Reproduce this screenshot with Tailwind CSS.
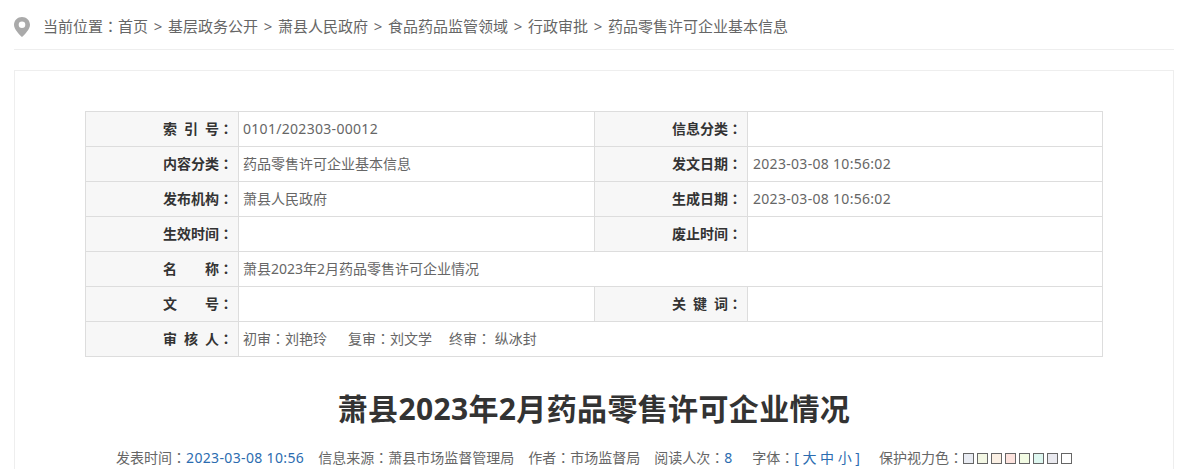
<!DOCTYPE html>
<html lang="zh-CN">
<head>
    <meta charset="UTF-8">
    <title>药品零售许可企业基本信息</title>
    <script src="https://cdn.jsdelivr.net/npm/@tailwindcss/browser@4"></script>
</head>
<body class="bg-white h-[469px] overflow-hidden font-['Noto_Sans','Noto_Sans_CJK_SC',sans-serif] text-[14px] text-[#666]">
    <div class="mx-[14px] w-[1160px]">
        <!-- breadcrumb -->
        <div class="flex items-center h-[50px] pt-[4px] border-b border-[#eee] text-[15px]">
            <svg class="w-[16px] h-[20px] mr-[13px]" viewBox="0 0 16 20"><path fill-rule="evenodd" fill="#aaa" d="M8 0C3.600 0 0 3.400 0 7.700c0 4.600 5.300 9.600 8 12.300 2.700-2.700 8-7.700 8-12.300C16 3.400 12.400 0 8 0zm0 11a3.300 3.300 0 1 1 0-6.600A3.300 3.300 0 0 1 8 11z"/></svg>
            <span>当前位置<span class="inline-block font-['Noto_Sans_CJK_TC']">：</span>首页</span>
            <span class="mx-[5.700px]">&gt;</span><span>基层政务公开</span>
            <span class="mx-[5.700px]">&gt;</span><span>萧县人民政府</span>
            <span class="mx-[5.700px]">&gt;</span><span>食品药品监管领域</span>
            <span class="mx-[5.700px]">&gt;</span><span>行政审批</span>
            <span class="mx-[5.700px]">&gt;</span><span>药品零售许可企业基本信息</span>
        </div>

        <!-- content card -->
        <div class="mt-[20px] h-[399px] border border-b-0 border-[#eee] px-[70px] pt-[40px]">
            <table class="w-[1017px] table-fixed border-collapse border border-[#ddd] [&_td]:pb-[2px] [&_th]:pb-[2px]">
                <colgroup>
                    <col class="w-[153px]"><col class="w-[356px]"><col class="w-[153px]"><col class="w-[355px]">
                </colgroup>
                <tbody>
                    <tr class="h-[35px]">
                        <th class="border border-[#ddd] bg-[#f7f7f7] text-right pr-[5px] font-bold text-[#333]"><span class="inline-flex justify-between w-[56px]"><span>索</span><span>引</span><span>号</span></span><span class="inline-block font-['Noto_Sans_CJK_TC']">：</span></th>
                        <td class="border border-[#ddd] pl-[4px] tracking-[0.3px]">0101/202303-00012</td>
                        <th class="border border-[#ddd] bg-[#f7f7f7] text-right pr-[5px] font-bold text-[#333]">信息分类<span class="inline-block font-['Noto_Sans_CJK_TC']">：</span></th>
                        <td class="border border-[#ddd] pl-[5px]"></td>
                    </tr>
                    <tr class="h-[35px]">
                        <th class="border border-[#ddd] bg-[#f7f7f7] text-right pr-[5px] font-bold text-[#333]">内容分类<span class="inline-block font-['Noto_Sans_CJK_TC']">：</span></th>
                        <td class="border border-[#ddd] pl-[4px]">药品零售许可企业基本信息</td>
                        <th class="border border-[#ddd] bg-[#f7f7f7] text-right pr-[5px] font-bold text-[#333]">发文日期<span class="inline-block font-['Noto_Sans_CJK_TC']">：</span></th>
                        <td class="border border-[#ddd] pl-[5px] tracking-[0.3px]">2023-03-08 10:56:02</td>
                    </tr>
                    <tr class="h-[35px]">
                        <th class="border border-[#ddd] bg-[#f7f7f7] text-right pr-[5px] font-bold text-[#333]">发布机构<span class="inline-block font-['Noto_Sans_CJK_TC']">：</span></th>
                        <td class="border border-[#ddd] pl-[4px]">萧县人民政府</td>
                        <th class="border border-[#ddd] bg-[#f7f7f7] text-right pr-[5px] font-bold text-[#333]">生成日期<span class="inline-block font-['Noto_Sans_CJK_TC']">：</span></th>
                        <td class="border border-[#ddd] pl-[5px] tracking-[0.3px]">2023-03-08 10:56:02</td>
                    </tr>
                    <tr class="h-[35px]">
                        <th class="border border-[#ddd] bg-[#f7f7f7] text-right pr-[5px] font-bold text-[#333]">生效时间<span class="inline-block font-['Noto_Sans_CJK_TC']">：</span></th>
                        <td class="border border-[#ddd] pl-[4px]"></td>
                        <th class="border border-[#ddd] bg-[#f7f7f7] text-right pr-[5px] font-bold text-[#333]">废止时间<span class="inline-block font-['Noto_Sans_CJK_TC']">：</span></th>
                        <td class="border border-[#ddd] pl-[5px]"></td>
                    </tr>
                    <tr class="h-[35px]">
                        <th class="border border-[#ddd] bg-[#f7f7f7] text-right pr-[5px] font-bold text-[#333]"><span class="inline-flex justify-between w-[56px]"><span>名</span><span>称</span></span><span class="inline-block font-['Noto_Sans_CJK_TC']">：</span></th>
                        <td colspan="3" class="border border-[#ddd] pl-[4px]">萧县2023年2月药品零售许可企业情况</td>
                    </tr>
                    <tr class="h-[35px]">
                        <th class="border border-[#ddd] bg-[#f7f7f7] text-right pr-[5px] font-bold text-[#333]"><span class="inline-flex justify-between w-[56px]"><span>文</span><span>号</span></span><span class="inline-block font-['Noto_Sans_CJK_TC']">：</span></th>
                        <td class="border border-[#ddd] pl-[4px]"></td>
                        <th class="border border-[#ddd] bg-[#f7f7f7] text-right pr-[5px] font-bold text-[#333]"><span class="inline-flex justify-between w-[56px]"><span>关</span><span>键</span><span>词</span></span><span class="inline-block font-['Noto_Sans_CJK_TC']">：</span></th>
                        <td class="border border-[#ddd] pl-[5px]"></td>
                    </tr>
                    <tr class="h-[35px]">
                        <th class="border border-[#ddd] bg-[#f7f7f7] text-right pr-[5px] font-bold text-[#333]"><span class="inline-flex justify-between w-[56px]"><span>审</span><span>核</span><span>人</span></span><span class="inline-block font-['Noto_Sans_CJK_TC']">：</span></th>
                        <td colspan="3" class="border border-[#ddd] pl-[4px]">初审<span class="inline-block font-['Noto_Sans_CJK_TC']">：</span>刘艳玲<span class="ml-[21px]">复审<span class="inline-block font-['Noto_Sans_CJK_TC']">：</span>刘文学</span><span class="ml-[17px]">终审<span class="inline-block font-['Noto_Sans_CJK_TC']">：</span> 纵冰封</span></td>
                    </tr>
                </tbody>
            </table>

            <h1 class="mt-[27px] text-center text-[30px] leading-[50px] font-bold text-[#333] tracking-[0.35px]">萧县2023年2月药品零售许可企业情况</h1>

            <div class="mt-[11px] flex justify-center items-center gap-[14px] h-[24px]">
                <span>发表时间<span class="inline-block font-['Noto_Sans_CJK_TC']">：</span><span class="text-[#2b6cb0] tracking-[0.35px]">2023-03-08 10:56</span></span>
                <span>信息来源<span class="inline-block font-['Noto_Sans_CJK_TC']">：</span>萧县市场监督管理局</span>
                <span>作者<span class="inline-block font-['Noto_Sans_CJK_TC']">：</span>市场监督局</span>
                <span>阅读人次<span class="inline-block font-['Noto_Sans_CJK_TC']">：</span><span class="text-[#2b6cb0]">8</span></span>
                <span class="ml-[6px] mr-[5px]">字体<span class="inline-block font-['Noto_Sans_CJK_TC']">：</span><span class="text-[#2b6cb0]">[ 大 中 小 ]</span></span>
                <span class="flex items-center">保护视力色<span class="inline-block font-['Noto_Sans_CJK_TC']">：</span>
                    <span class="flex gap-[3px] mt-[2px]">
                        <i class="block w-[11px] h-[11px] border border-[#666] bg-[#e9ecf3]"></i>
                        <i class="block w-[11px] h-[11px] border border-[#666] bg-[#f3f7e4]"></i>
                        <i class="block w-[11px] h-[11px] border border-[#666] bg-[#fbf0e4]"></i>
                        <i class="block w-[11px] h-[11px] border border-[#666] bg-[#fde3de]"></i>
                        <i class="block w-[11px] h-[11px] border border-[#666] bg-[#f2fbe3]"></i>
                        <i class="block w-[11px] h-[11px] border border-[#666] bg-[#def7f0]"></i>
                        <i class="block w-[11px] h-[11px] border border-[#666] bg-[#e9e9ef]"></i>
                        <i class="block w-[11px] h-[11px] border border-[#666] bg-white"></i>
                    </span>
                </span>
            </div>
        </div>
    </div>
</body>
</html>
